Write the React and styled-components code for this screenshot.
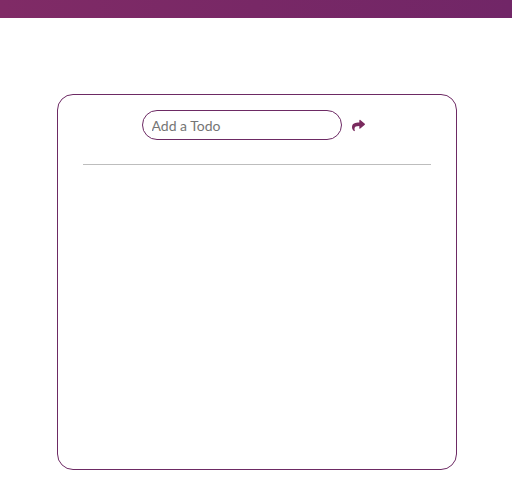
import { FaShare } from 'react-icons/fa';
import styled, { createGlobalStyle } from 'styled-components';

const Global = createGlobalStyle`
  body {
    margin: 0;
    background: #fff;
    font-family: Lato, "Open Sans", sans-serif;
  }
`;

const Header = styled.header`
  height: 18px;
  background: linear-gradient(90deg, #802b66 0%, #782866 50%, #712667 100%);
`;

const Main = styled.main`
  display: flex;
  justify-content: center;
  padding: 76px 0 0 2px;
`;

const Card = styled.section`
  width: 400px;
  height: 376px;
  box-sizing: border-box;
  border: 1px solid #6d2a64;
  border-radius: 16px;
  padding: 15px 25px 0;
  display: flex;
  flex-direction: column;
  align-items: center;
`;

const Form = styled.form`
  display: flex;
  align-items: center;
  gap: 10px;
  margin-left: -8px;
`;

const Input = styled.input`
  width: 200px;
  height: 30px;
  box-sizing: border-box;
  border: 1px solid #6d2a64;
  border-radius: 15px;
  padding: 0 9px;
  font-family: Lato, "Open Sans", sans-serif;
  font-size: 14px;
  color: #333;
  outline: none;

  &::placeholder {
    color: #757575;
  }
`;

const Submit = styled.button`
  border: 0;
  background: none;
  padding: 0;
  display: flex;
  color: #7a2a5e;
  font-size: 13px;
  cursor: pointer;
`;

const Divider = styled.hr`
  align-self: stretch;
  border: 0;
  border-top: 1px solid #bdbdbd;
  margin: 24px 0 0;
`;

export default function App() {
  return (
    <>
      <Global />
      <Header />
      <Main>
        <Card>
          <Form onSubmit={(e) => e.preventDefault()}>
            <Input placeholder="Add a Todo" />
            <Submit type="submit">
              <FaShare />
            </Submit>
          </Form>
          <Divider />
        </Card>
      </Main>
    </>
  );
}
